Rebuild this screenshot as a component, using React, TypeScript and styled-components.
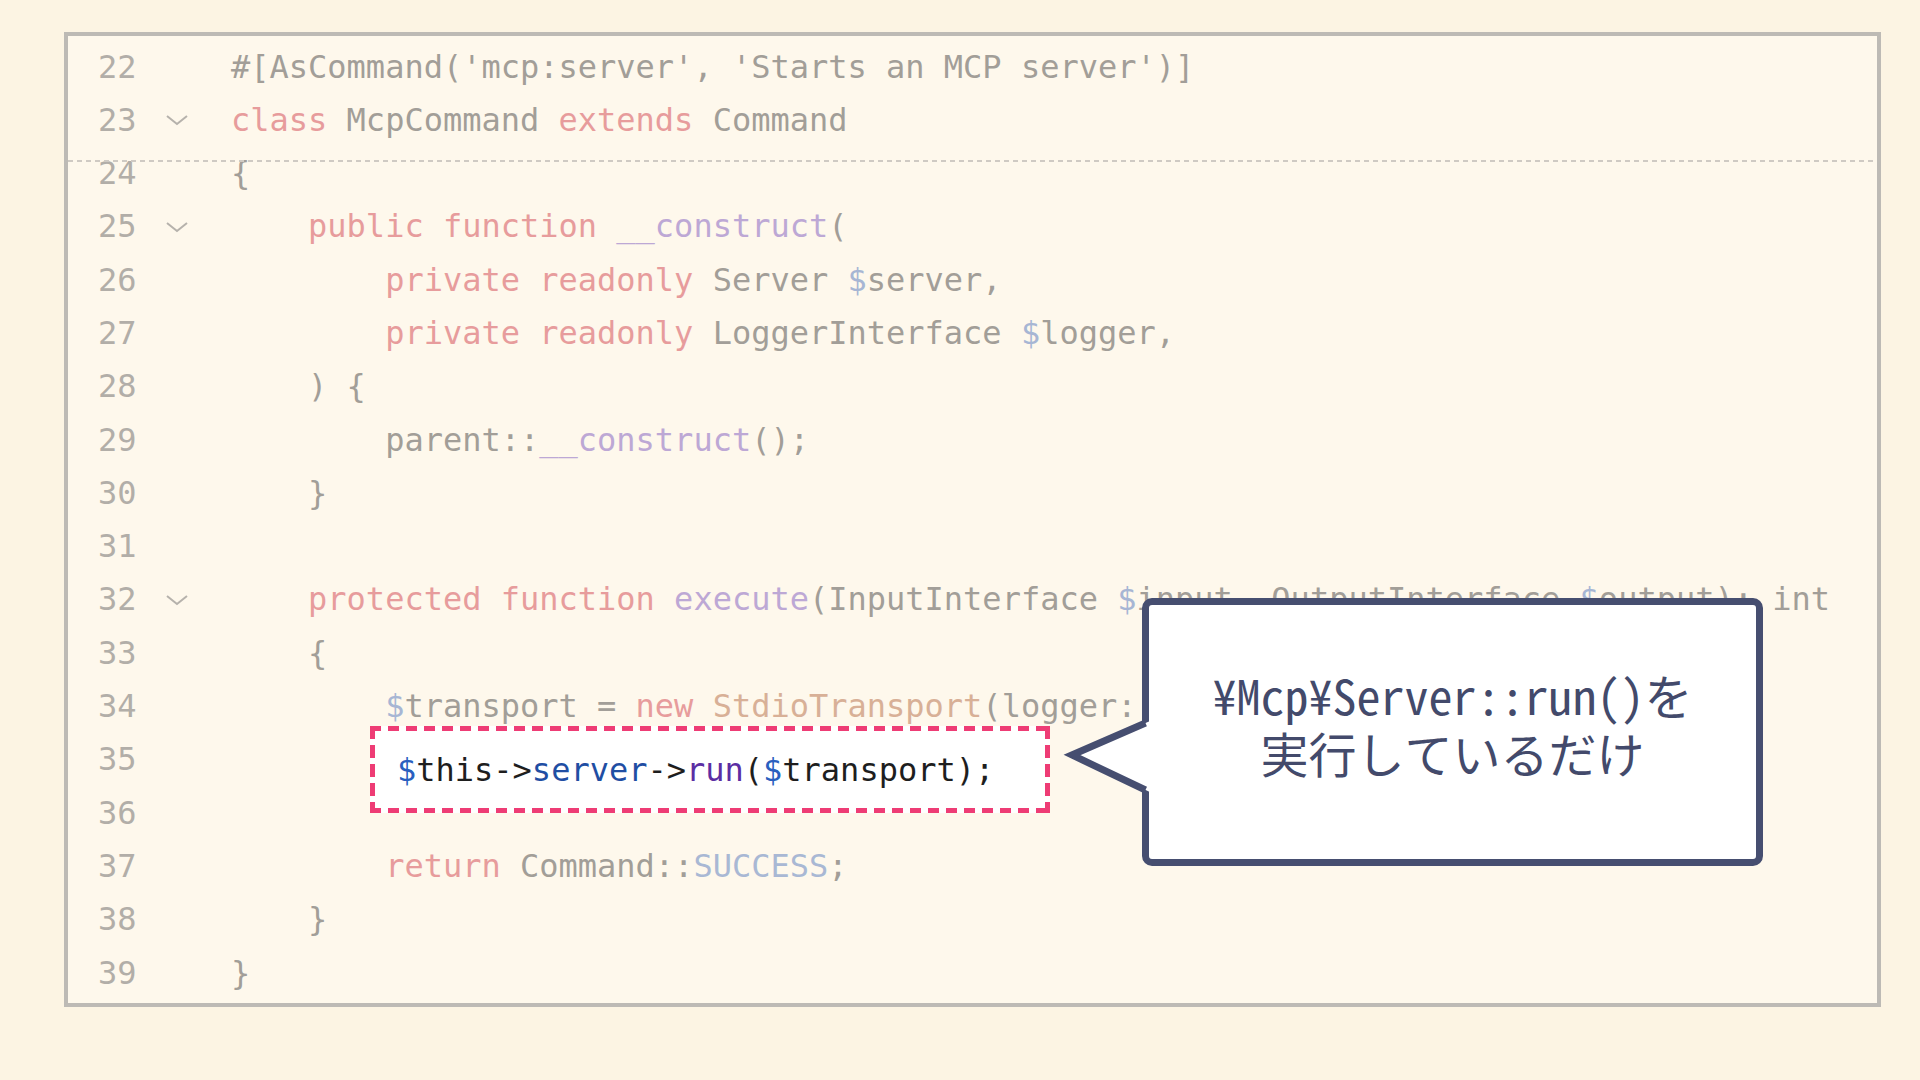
import React, { FC } from 'react';
import styled, { createGlobalStyle } from 'styled-components';

type Kind = 'p' | 'k' | 'f' | 'v' | 'c' | 't';
type Tok = [string, Kind];
type Line = { no: number; indent: number; fold?: boolean; toks: Tok[] };

const lines: Line[] = [
  { no: 22, indent: 0, toks: [["#[AsCommand('mcp:server', 'Starts an MCP server')]", 'p']] },
  { no: 23, indent: 0, fold: true, toks: [['class', 'k'], [' McpCommand ', 'p'], ['extends', 'k'], [' Command', 'p']] },
  { no: 24, indent: 0, toks: [['{', 'p']] },
  { no: 25, indent: 4, fold: true, toks: [['public function', 'k'], [' ', 'p'], ['__construct', 'f'], ['(', 'p']] },
  { no: 26, indent: 8, toks: [['private readonly', 'k'], [' Server ', 'p'], ['$', 'v'], ['server,', 'p']] },
  { no: 27, indent: 8, toks: [['private readonly', 'k'], [' LoggerInterface ', 'p'], ['$', 'v'], ['logger,', 'p']] },
  { no: 28, indent: 4, toks: [[') {', 'p']] },
  { no: 29, indent: 8, toks: [['parent::', 'p'], ['__construct', 'f'], ['();', 'p']] },
  { no: 30, indent: 4, toks: [['}', 'p']] },
  { no: 31, indent: 0, toks: [] },
  {
    no: 32, indent: 4, fold: true,
    toks: [['protected function', 'k'], [' ', 'p'], ['execute', 'f'], ['(InputInterface ', 'p'], ['$', 'v'],
      ['input, OutputInterface ', 'p'], ['$', 'v'], ['output): int', 'p']],
  },
  { no: 33, indent: 4, toks: [['{', 'p']] },
  {
    no: 34, indent: 8,
    toks: [['$', 'v'], ['transport = ', 'p'], ['new', 'k'], [' ', 'p'], ['StdioTransport', 't'],
      ['(logger: ', 'p'], ['$', 'v'], ['this->logger);', 'p']],
  },
  { no: 35, indent: 8, toks: [['$', 'v'], ['this->server->run(', 'p'], ['$', 'v'], ['transport);', 'p']] },
  { no: 36, indent: 0, toks: [] },
  { no: 37, indent: 8, toks: [['return', 'k'], [' Command::', 'p'], ['SUCCESS', 'c'], [';', 'p']] },
  { no: 38, indent: 4, toks: [['}', 'p']] },
  { no: 39, indent: 0, toks: [['}', 'p']] },
];

const kindColor: Record<Kind, string> = {
  p: '#a29e98',
  k: '#e79c9c',
  f: '#bda8d5',
  v: '#a7b6d4',
  c: '#a9b8d4',
  t: '#d8b097',
};

const GlobalStyle = createGlobalStyle`
  html, body {
    margin: 0;
    padding: 0;
    background: #fcf4e3;
  }
`;

const Page = styled.div`
  min-height: 100vh;
  box-sizing: border-box;
  padding: 32px 0 0 64px;
`;

const Frame = styled.div`
  position: relative;
  width: 1817px;
  height: 975px;
  box-sizing: border-box;
  border: 4px solid #bdbab5;
  background: #fef8ec;
  padding: 4.5px 0 0 30px;
  overflow: hidden;
`;

const Row = styled.div`
  display: flex;
  align-items: center;
  height: 53.3px;
  line-height: 53.3px;
  font-family: 'DejaVu Sans Mono', monospace;
  font-size: 32px;
  white-space: pre;
`;

const LineNo = styled.span`
  width: 39px;
  color: #b2aea8;
`;

const Gutter = styled.span`
  display: flex;
  align-items: center;
  width: 94px;
  height: 100%;
  box-sizing: border-box;
  padding-left: 29px;
`;

const Code = styled.span<{ $indent: number }>`
  padding-left: ${(p) => p.$indent}ch;
`;

const Tk = styled.span<{ $kind: Kind }>`
  color: ${(p) => kindColor[p.$kind]};
`;

const StickyRule = styled.div`
  position: absolute;
  left: 0;
  right: 0;
  top: 124px;
  height: 2px;
  background: repeating-linear-gradient(90deg, #cfcac3 0 5px, transparent 5px 9px);
`;

const dashH = 'repeating-linear-gradient(90deg, #ee3c75 0 11px, transparent 11px 18px)';
const dashV = 'repeating-linear-gradient(180deg, #ee3c75 0 13px, transparent 13px 19px)';

const Highlight = styled.div`
  position: absolute;
  left: 302px;
  top: 690px;
  width: 680px;
  height: 87px;
  box-sizing: border-box;
  padding-left: 27px;
  display: flex;
  align-items: center;
  background:
    ${dashH} top left / 100% 5px no-repeat,
    ${dashH} bottom left / 100% 5px no-repeat,
    ${dashV} top left / 5px 100% no-repeat,
    ${dashV} top right / 5px 100% no-repeat,
    #ffffff;
  font-family: 'DejaVu Sans Mono', monospace;
  font-size: 32px;
  color: #1e1e1e;
  white-space: pre;

  .var { color: #2a5fbf; }
  .prop { color: #1f4ea3; }
  .fn { color: #5b2ea3; }
`;

const Callout = styled.div`
  position: absolute;
  left: 1074px;
  top: 562px;
  width: 621px;
  height: 268px;
  box-sizing: border-box;
  border: 7px solid #464e70;
  border-radius: 10px;
  background: #ffffff;
  display: flex;
  align-items: center;
  justify-content: center;
  padding-bottom: 18px;
  text-align: center;
  font-family: 'Noto Sans Mono CJK JP', 'Noto Sans CJK JP', sans-serif;
  font-size: 48px;
  line-height: 58px;
  color: #434a6b;
`;

const Pointer = styled.svg`
  position: absolute;
  left: -92px;
  top: 100px;
  width: 100px;
  height: 100px;
  overflow: visible;
`;

const Chevron: FC = () => (
  <svg width="22" height="12" viewBox="0 0 22 12">
    <polyline points="1,2 11,10 21,2" fill="none" stroke="#b6b2ac" strokeWidth="2" />
  </svg>
);

const App: FC = () => (
  <>
    <GlobalStyle />
    <Page>
      <Frame>
        {lines.map((line) => (
          <Row key={line.no}>
            <LineNo>{line.no}</LineNo>
            <Gutter>{line.fold && <Chevron />}</Gutter>
            <Code $indent={line.indent}>
              {line.toks.map(([text, kind], i) => (
                <Tk key={i} $kind={kind}>{text}</Tk>
              ))}
            </Code>
          </Row>
        ))}
        <StickyRule />
        <Highlight>
          <span className="var">$</span>
          this-&gt;
          <span className="prop">server</span>
          -&gt;
          <span className="fn">run</span>
          (
          <span className="var">$</span>
          transport);
        </Highlight>
        <Callout>
          <Pointer viewBox="0 0 100 100">
            <polygon points="15,50 96,14.7 96,88.6" fill="#ffffff" />
            <polyline
              points="88.5,18 15,50 88.5,85"
              fill="none"
              stroke="#464e70"
              strokeWidth="7"
              strokeLinejoin="miter"
            />
          </Pointer>
          <div>
            ¥Mcp¥Server::run()を
            <br />
            実行しているだけ
          </div>
        </Callout>
      </Frame>
    </Page>
  </>
);

export default App;
